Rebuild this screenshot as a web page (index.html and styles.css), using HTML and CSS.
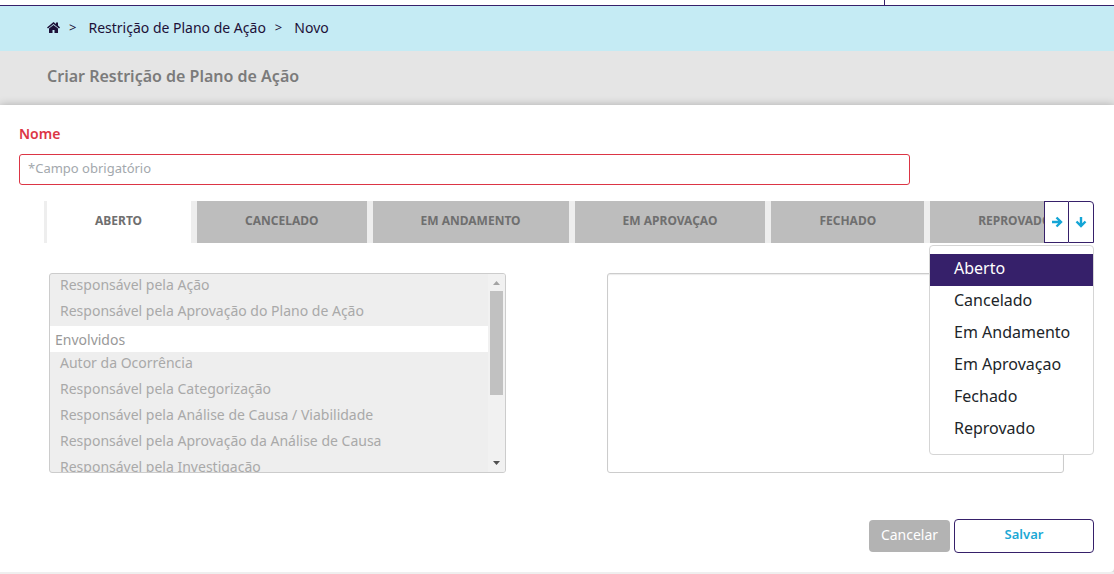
FILE: index.html
```html
<!DOCTYPE html>
<html lang="pt-BR">
<head>
<meta charset="utf-8">
<meta name="viewport" content="width=device-width, initial-scale=1">
<title>Criar Restrição de Plano de Ação</title>
<link rel="stylesheet" href="styles.css">
</head>
<body>
<header class="topbar"><div class="topbar-user"></div></header>
<nav class="breadcrumb" aria-label="Navegação">
  <a class="crumb crumb-home" href="#" aria-label="Início"><svg width="13" height="11" viewBox="0 0 26 22"><path d="M13 0 0 11l2 2L13 4l11 9 2-2-4-4V1h-4v3z"/><path d="M13 6 4 13v9h7v-6h4v6h7v-9z"/></svg></a>
  <span class="sep">&gt;</span>
  <a class="crumb crumb-parent" href="#">Restrição de Plano de Ação</a>
  <span class="sep">&gt;</span>
  <span class="crumb crumb-current">Novo</span>
</nav>
<div class="page-title"><h1>Criar Restrição de Plano de Ação</h1></div>
<main class="card">
  <form class="form">
    <div class="field">
      <label class="label" for="nome">Nome</label>
      <input class="input" id="nome" type="text" placeholder="*Campo obrigatório">
    </div>
    <div class="tabs">
      <div class="tab-strip" role="tablist">
        <button class="tab active" type="button" role="tab" aria-selected="true">ABERTO</button>
        <button class="tab" type="button" role="tab">CANCELADO</button>
        <button class="tab" type="button" role="tab">EM ANDAMENTO</button>
        <button class="tab" type="button" role="tab">EM APROVAÇAO</button>
        <button class="tab" type="button" role="tab">FECHADO</button>
        <button class="tab" type="button" role="tab">REPROVADO</button>
      </div>
      <button class="tab-nav" type="button" aria-label="Próxima aba"><svg width="12" height="12" viewBox="0 0 12 12"><path d="M1 6h9M5.500 1.500 10 6l-4.500 4.500"/></svg></button>
      <button class="tab-nav tab-nav-last" type="button" aria-label="Listar abas"><svg width="12" height="12" viewBox="0 0 12 12"><path d="M6 1v9M1.500 5.500 6 10l4.500-4.500"/></svg></button>
      <div class="menu" role="menu">
        <button class="menu-item selected" type="button" role="menuitem">Aberto</button>
        <button class="menu-item" type="button" role="menuitem">Cancelado</button>
        <button class="menu-item" type="button" role="menuitem">Em Andamento</button>
        <button class="menu-item" type="button" role="menuitem">Em Aprovaçao</button>
        <button class="menu-item" type="button" role="menuitem">Fechado</button>
        <button class="menu-item" type="button" role="menuitem">Reprovado</button>
      </div>
    </div>
    <div class="lists">
      <div class="listbox">
        <ul class="options" role="listbox" aria-label="Disponíveis">
          <li class="option" role="option">Responsável pela Ação</li>
          <li class="option" role="option">Responsável pela Aprovação do Plano de Ação</li>
          <li class="group">Envolvidos</li>
          <li class="option" role="option">Autor da Ocorrência</li>
          <li class="option" role="option">Responsável pela Categorização</li>
          <li class="option" role="option">Responsável pela Análise de Causa / Viabilidade</li>
          <li class="option" role="option">Responsável pela Aprovação da Análise de Causa</li>
          <li class="option" role="option">Responsável pela Investigação</li>
        </ul>
        <div class="scrollbar" aria-hidden="true">
          <svg class="arrow arrow-up" width="7" height="4" viewBox="0 0 7 4"><path d="M0 4 3.500 0 7 4z"/></svg>
          <div class="track"><div class="thumb"></div></div>
          <svg class="arrow" width="7" height="4" viewBox="0 0 7 4"><path d="M0 0h7L3.500 4z"/></svg>
        </div>
      </div>
      <div class="listbox listbox-target" role="listbox" aria-label="Selecionados"></div>
    </div>
    <div class="actions">
      <button class="btn btn-cancel" type="button">Cancelar</button>
      <button class="btn btn-save" type="submit">Salvar</button>
    </div>
  </form>
</main>
</body>
</html>
```
FILE: styles.css
```css
* { box-sizing: border-box; }
body { margin: 0; background: #efefef; font-family: "Noto Sans", "Open Sans", sans-serif; font-size: 14px; color: #212529; }
button, input { font-family: inherit; margin: 0; }
button { cursor: pointer; white-space: nowrap; }

.topbar { display: flex; justify-content: flex-end; height: 6px; background: #fff; border-bottom: 1px solid #36206a; }
.topbar-user { width: 230px; border-left: 1px solid #36206a; }

.breadcrumb { display: flex; align-items: center; height: 45px; padding: 0 47px 3px; background: #c5ebf4; color: #1d1138; }
.crumb { color: inherit; text-decoration: none; }
.crumb-home { display: flex; }
.crumb-home svg { fill: #1d1138; }
.sep { margin: 0 12px 0 9px; font-size: 13px; }

.page-title { display: flex; align-items: center; height: 54px; padding: 0 47px 4px; background: #e5e5e5; }
.page-title h1 { margin: 0; font-size: 16px; font-weight: 600; line-height: 24px; color: #7b7b7b; }

.card { background: #fff; border-radius: 0 0 4px 0; box-shadow: 0 0 8px rgba(0, 0, 0, 0.25); padding: 19px 20px 19px 19px; }
.field { display: grid; width: calc(83% - 1px); }
.label { font-weight: 600; line-height: 20px; color: #dc3545; }
.input { width: 100%; height: 31px; margin-top: 10px; padding: 0 8px 3px; border: 1px solid #dc3545; border-radius: 3px; background: #fff; font-size: 13px; color: #495057; outline: none; }
.input::placeholder { color: #a3a8ad; opacity: 1; }

.tabs { position: relative; display: flex; height: 42px; margin: 16px 0 0 25px; }
.tab-strip { display: flex; flex: 1; min-width: 0; overflow: hidden; }
.tab { flex: none; padding: 0 48px 3px; border: 0 solid #eee; border-width: 0 3px; background: #bdbdbd; color: #6f6f6f; font-size: 12px; font-weight: 700; }
.tab.active { padding-right: 49px; background: #fff; }
.tab-nav { display: flex; align-items: center; justify-content: center; flex: none; width: 24px; padding: 0; border: 1px solid #36206a; border-right: 0; background: #fff; }
.tab-nav-last { width: 26px; border-right: 1px solid #36206a; border-radius: 0 4px 0 0; }
.tab-nav svg { fill: none; stroke: #14a5d6; stroke-width: 2.4; }

.menu { position: absolute; top: 44px; right: 0; z-index: 2; width: 165px; padding: 8px 0; border: 1px solid #d5d5d5; border-radius: 4px; background: #fff; }
.menu-item { display: block; width: 100%; height: 32px; padding: 0 20px 4px 24px; border: 0; background: #fff; color: #212529; font-size: 16px; text-align: left; }
.menu-item.selected { background: #36206a; color: #fff; }

.lists { display: grid; grid-template-columns: 1fr 1fr; gap: 101px; margin: 30px 30px 0; }
.listbox { display: flex; height: 200px; border: 1px solid #ccc; border-radius: 3px; background: #eee; overflow: hidden; }
.listbox-target { background: #fff; box-shadow: inset 0 1px 1px rgba(0, 0, 0, 0.08); }
.options { flex: 1; min-width: 0; margin: 0; padding: 0; list-style: none; overflow: hidden; white-space: nowrap; }
.option { height: 26px; padding-left: 10px; line-height: 22px; color: #a9a9a9; }
.group { height: 26px; padding-left: 5px; line-height: 28px; background: #fff; color: #999; }
.scrollbar { display: flex; flex-direction: column; align-items: center; width: 17px; padding: 7px 0; background: #f1f1f1; }
.track { flex: 1; margin: 6px 0; }
.thumb { width: 13px; height: 104px; background: #c1c1c1; }
.arrow { fill: #505050; }
.arrow-up { fill: #a3a3a3; }

.actions { display: flex; align-items: center; justify-content: flex-end; gap: 4px; margin-top: 46px; }
.btn { border-radius: 4px; }
.btn-cancel { width: 81px; height: 32px; padding: 0 0 4px; border: 0; background: #b3b3b3; color: #fff; font-size: 14px; }
.btn-save { width: 140px; height: 34px; padding: 0 0 4px; border: 1px solid #36206a; background: #fff; color: #1ba8d5; font-size: 13px; font-weight: 600; }
```
